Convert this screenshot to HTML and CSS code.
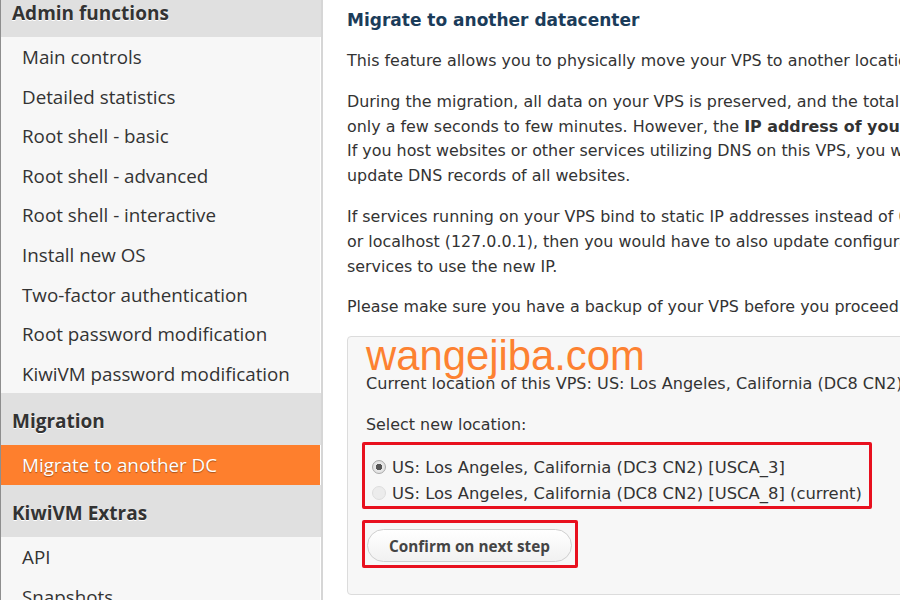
FILE: index.html
```
<!DOCTYPE html>
<html lang="en">
<head>
    <meta charset="UTF-8">
    <title>KiwiVM - Migrate to another datacenter</title>
    <link rel="stylesheet" href="styles.css">
</head>
<body>
<div class="page">
    <div class="sidebar">
        <div class="nav-head">Admin functions</div>
        <a class="nav-item" href="#">Main controls</a>
        <a class="nav-item" href="#">Detailed statistics</a>
        <a class="nav-item" href="#">Root shell - basic</a>
        <a class="nav-item" href="#">Root shell - advanced</a>
        <a class="nav-item" href="#">Root shell - interactive</a>
        <a class="nav-item" href="#">Install new OS</a>
        <a class="nav-item" href="#">Two-factor authentication</a>
        <a class="nav-item" href="#">Root password modification</a>
        <a class="nav-item" href="#">KiwiVM password modification</a>
        <div class="nav-head">Migration</div>
        <a class="nav-item active" href="#">Migrate to another DC</a>
        <div class="nav-head">KiwiVM Extras</div>
        <a class="nav-item" href="#">API</a>
        <a class="nav-item" href="#">Snapshots</a>
    </div>

    <div class="main">
        <h2 class="title">Migrate to another datacenter</h2>
        <p>This feature allows you to physically move your VPS to another location.</p>
        <p>During the migration, all data on your VPS is preserved, and the total downtime is usually<br>
        only a few seconds to few minutes. However, the <b>IP address of your VPS will change</b>.<br>
        If you host websites or other services utilizing DNS on this VPS, you will need to<br>
        update DNS records of all websites.</p>
        <p>If services running on your VPS bind to static IP addresses instead of 0.0.0.0<br>
        or localhost (127.0.0.1), then you would have to also update configuration of these<br>
        services to use the new IP.</p>
        <p>Please make sure you have a backup of your VPS before you proceed.</p>

        <div class="box">
            <div class="mark">wangejiba.com</div>
            <div class="current">Current location of this VPS: US: Los Angeles, California (DC8 CN2) [USCA_8]</div>
            <div class="select-label">Select new location:</div>
            <div class="hl hl-radios">
                <label class="opt"><input type="radio" name="loc" checked> US: Los Angeles, California (DC3 CN2) [USCA_3]</label>
                <label class="opt"><input type="radio" name="loc" disabled> US: Los Angeles, California (DC8 CN2) [USCA_8] (current)</label>
            </div>
            <div class="hl hl-btn">
                <button class="btn">Confirm on next step</button>
            </div>
        </div>
    </div>
</div>
</body>
</html>
```

FILE: styles.css
```
body { margin: 0; background: #fff; overflow: hidden; }
.page { display: flex; height: 600px; overflow: hidden; }

.sidebar { flex: 0 0 320px; margin-top: -15px; border-left: 1px solid #8e8e8e; border-right: 2px solid #d6d6d6; background: #f7f7f7; font-family: "Open Sans", sans-serif; font-size: 18.8px; color: #333; }
.nav-head { height: 52px; line-height: 56px; padding-left: 11px; background: #e0e0e0; font-weight: bold; font-size: 19px; text-shadow: 0 1px 0 #fff; }
.nav-item { display: block; height: 39.6px; line-height: 41px; padding-left: 21px; color: #333; text-decoration: none; box-shadow: inset -1px 0 #fff; }
.nav-item.active { background: #fe7f2d; color: #fff; text-shadow: 0 1px 1px rgba(0,0,0,0.35); }

.main { flex: 1; min-width: 0; padding: 8px 0 0 24px; font-family: "DejaVu Sans", Verdana, sans-serif; font-size: 15.9px; color: #333; white-space: nowrap; overflow: hidden; }
.title { margin: 0 0 16px; font-size: 17px; line-height: 25px; color: #1b3c5a; }
.main p { margin: 0 0 16px; line-height: 24.8px; }

.box { width: 640px; margin-top: 16px; padding: 2px 18px 26px; border: 1px solid #dcdcdc; border-radius: 4px; background: #f7f7f7; }
.mark { font-family: "Liberation Sans", Arial, sans-serif; font-size: 41.8px; line-height: 33px; color: #fd8131; }
.current { line-height: 24px; font-size: 16.1px; }
.select-label { margin-top: 17px; line-height: 24px; }

.hl { border: 3px solid #e8101e; border-radius: 2px; }
.hl-radios { width: 498px; margin: 5px 0 0 -4px; padding: 9px 0 0 6px; }
.hl-btn { display: inline-flex; margin: 11px 0 0 -4px; padding: 6px 3px 3px 2px; }

.opt { display: flex; align-items: center; height: 26px; font-size: 16.4px; }
.opt input { appearance: none; width: 14px; height: 14px; margin: 0 6px 0 1px; border: 1px solid #c4c4c4; border-radius: 50%; background: radial-gradient(circle at 50% 35%, #fff, #e4e4e4); }
.opt input:checked { background: radial-gradient(circle, #555 0 3px, #e9e9e9 3.5px, #d8d8d8); border-color: #aaa; }
.opt input:disabled { background: #ececec; border-color: #dedede; }

.btn { width: 205px; height: 33px; border: 1px solid #cfcfcf; border-radius: 17px; background: linear-gradient(#fff, #f1f1f1); font-family: "Open Sans", sans-serif; font-weight: bold; font-size: 15.3px; color: #444; }
```
